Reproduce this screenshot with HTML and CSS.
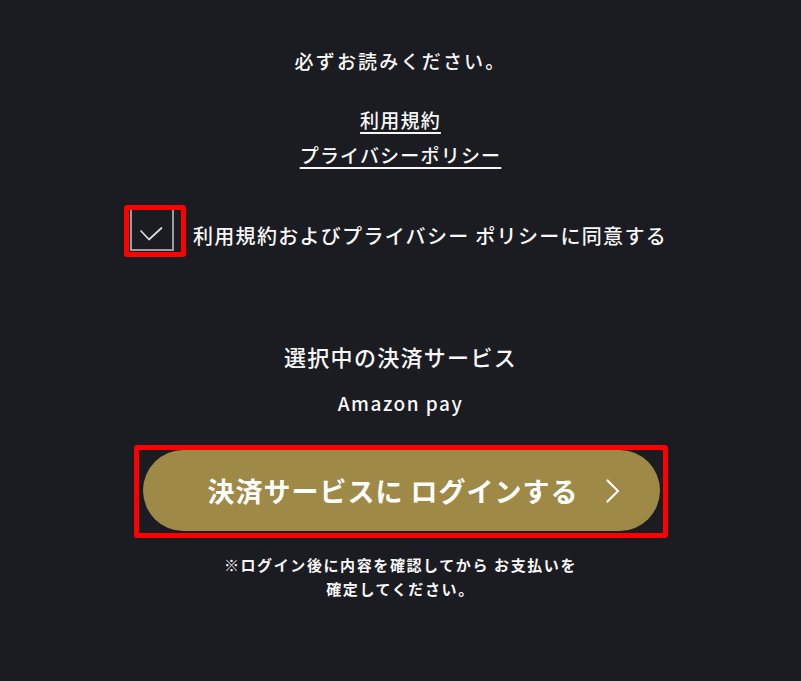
FILE: index.html
```html
<!DOCTYPE html>
<html lang="ja">
<head>
<meta charset="utf-8">
<title>お支払い</title>
<link rel="stylesheet" href="styles.css">
</head>
<body>
<main class="page">
  <p class="lead">必ずお読みください。</p>
  <nav class="links">
    <a class="doc-link" href="#">利用規約</a>
    <a class="doc-link" href="#">プライバシーポリシー</a>
  </nav>
  <label class="agree">
    <span class="agree-mark">
      <span class="checkbox">
        <svg class="check" width="42" height="40" viewBox="0 0 42 40"><polyline points="11,21 19,29.5 31.5,18" fill="none" stroke="#dcdcdc" stroke-width="1.7" stroke-linecap="round" stroke-linejoin="round"/></svg>
      </span>
    </span>
    <span class="agree-text">利用規約およびプライバシー ポリシーに同意する</span>
  </label>
  <h2 class="service-title">選択中の決済サービス</h2>
  <p class="service-name">Amazon pay</p>
  <div class="cta-mark">
    <button class="cta" type="button">
      <span class="cta-text">決済サービスに ログインする</span>
      <svg class="chev" width="14" height="24" viewBox="0 0 14 24"><polyline points="1.5,1.5 12,12 1.5,22.5" fill="none" stroke="#fff" stroke-width="2.2" stroke-linecap="round" stroke-linejoin="round"/></svg>
    </button>
  </div>
  <p class="note">※ログイン後に内容を確認してから お支払いを<br>確定してください。</p>
</main>
</body>
</html>
```

FILE: styles.css
```css
html, body {
  margin: 0;
  padding: 0;
  background: #1b1c21;
}
body {
  color: #f7f7f7;
  font-family: "Noto Sans CJK JP", "Noto Sans", sans-serif;
  font-weight: 500;
}
.page {
  display: flex;
  flex-direction: column;
  align-items: center;
  padding-top: 48px;
  min-height: 633px;
}
.lead {
  margin: 0;
  font-size: 19px;
  line-height: 26px;
  letter-spacing: 2.2px;
}
.links {
  display: flex;
  flex-direction: column;
  align-items: center;
  margin-top: 28px;
}
.doc-link {
  color: #f7f7f7;
  font-size: 19px;
  line-height: 35px;
  letter-spacing: 1.2px;
  text-decoration: underline;
  text-decoration-thickness: 2px;
  text-underline-offset: 4px;
}
.agree {
  display: flex;
  align-items: flex-start;
  margin-top: 33px;
  margin-right: 10px;
}
.agree-mark {
  display: block;
  border: 5px solid #ff0000;
  border-radius: 3px;
  padding: 0 7px 1px 1px;
}
.checkbox {
  display: block;
  width: 40px;
  height: 39px;
  border: 2px solid #9c9c9c;
  border-top: none;
  position: relative;
}
.check {
  position: absolute;
  left: -2px;
  top: 0;
}
.agree-text {
  margin-left: 7px;
  margin-top: 16px;
  font-size: 20px;
  line-height: 30px;
  letter-spacing: 1.3px;
}
.service-title {
  margin: 84px 0 0;
  font-size: 22px;
  line-height: 30px;
  font-weight: 500;
  letter-spacing: 1.3px;
}
.service-name {
  margin: 19px 0 0;
  font-size: 19px;
  line-height: 26px;
  letter-spacing: 1.5px;
}
.cta-mark {
  margin-top: 29px;
  border: 5px solid #ff0000;
  border-radius: 3px;
  padding: 0 3px 2px 4px;
}
.cta {
  position: relative;
  display: flex;
  align-items: center;
  justify-content: center;
  width: 517px;
  height: 81px;
  padding: 0 16px 0 0;
  border: none;
  border-radius: 41px;
  background: #9f8947;
  color: #ffffff;
  font-family: "Noto Sans CJK JP", "Noto Sans", sans-serif;
  font-weight: 700;
  font-size: 27px;
  letter-spacing: 1px;
  cursor: pointer;
}
.cta-text {
  line-height: 36px;
}
.chev {
  position: absolute;
  right: 40px;
  top: 29px;
}
.note {
  margin: 15px 0 0;
  text-align: center;
  font-size: 15px;
  line-height: 24px;
  letter-spacing: 1.6px;
  font-weight: 700;
}
```
